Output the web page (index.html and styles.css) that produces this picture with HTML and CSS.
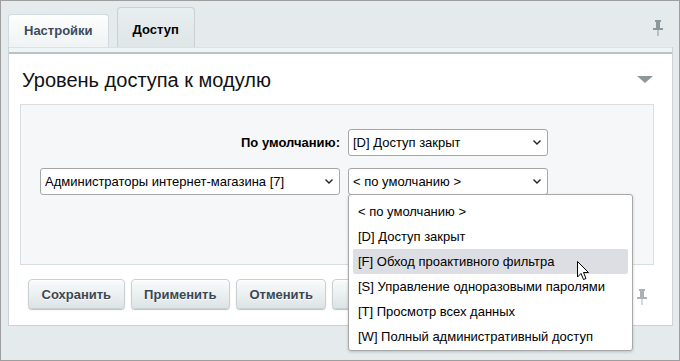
FILE: index.html
```html
<!DOCTYPE html>
<html lang="ru">
  <head>
    <meta charset="UTF-8" />
    <title>Доступ</title>
    <link rel="stylesheet" href="styles.css">
  </head>
  <body>
    <div class="window">
      <div class="tabs">
        <div class="tab">Настройки</div>
        <div class="tab tab-active">Доступ</div>
        <svg class="pin pin-top" width="10" height="16" viewBox="0 0 10 16">
          <rect x="2" y="0" width="6" height="2" fill="#8d969b" />
          <rect x="3" y="2" width="4" height="6" fill="#8d969b" />
          <rect x="0" y="8" width="10" height="2" fill="#8d969b" />
          <rect x="4.5" y="10" width="1" height="6" fill="#8d969b" />
        </svg>
      </div>

      <div class="panel">
        <div class="panel-strip"></div>

        <div class="panel-head">
          <h2>Уровень доступа к модулю</h2>
          <span class="collapse"></span>
        </div>

        <div class="access-box">
          <div class="access-grid">
            <div class="label">По умолчанию:</div>
            <div class="select">
              <span>[D] Доступ закрыт</span>
              <svg class="chevron" width="8" height="5" viewBox="0 0 8 5"><path d="M0.5 0.5 L4 4 L7.5 0.5" fill="none" stroke="#222" stroke-width="1.4" /></svg>
            </div>

            <div class="select">
              <span>Администраторы интернет-магазина [7]</span>
              <svg class="chevron" width="8" height="5" viewBox="0 0 8 5"><path d="M0.5 0.5 L4 4 L7.5 0.5" fill="none" stroke="#222" stroke-width="1.4" /></svg>
            </div>
            <div class="select select-open">
              <span>&lt; по умолчанию &gt;</span>
              <svg class="chevron" width="8" height="5" viewBox="0 0 8 5"><path d="M0.5 0.5 L4 4 L7.5 0.5" fill="none" stroke="#222" stroke-width="1.4" /></svg>

              <ul class="dropdown">
                <li>&lt; по умолчанию &gt;</li>
                <li>[D] Доступ закрыт</li>
                <li class="hover">[F] Обход проактивного фильтра
                  <svg class="cursor" width="13" height="20" viewBox="0 0 13 20">
                    <path d="M0.5 0.5 L0.5 16 L4 12.5 L6.5 18.5 L9 17.5 L6.5 11.5 L11.5 11.5 Z" fill="#fff" stroke="#000" stroke-width="1" stroke-linejoin="miter" />
                  </svg>
                </li>
                <li>[S] Управление одноразовыми паролями</li>
                <li>[T] Просмотр всех данных</li>
                <li>[W] Полный административный доступ</li>
              </ul>
            </div>
          </div>
        </div>

        <div class="buttons">
          <button class="btn">Сохранить</button>
          <button class="btn">Применить</button>
          <button class="btn">Отменить</button>
          <button class="btn btn-hidden"></button>
          <svg class="pin pin-bottom" width="10" height="16" viewBox="0 0 10 16">
            <rect x="2" y="0" width="6" height="2" fill="#a9b1b5" />
            <rect x="3" y="2" width="4" height="6" fill="#a9b1b5" />
            <rect x="0" y="8" width="10" height="2" fill="#a9b1b5" />
            <rect x="4.5" y="10" width="1" height="6" fill="#a9b1b5" />
          </svg>
        </div>
      </div>
    </div>
  </body>
</html>
```

FILE: styles.css
```css
body {
  margin: 0;
  font-family: "Liberation Sans", Arial, sans-serif;
  font-size: 13px;
  color: #000;
}

.window {
  box-sizing: border-box;
  width: 680px;
  height: 361px;
  border: 1px solid #9e9e9e;
  padding: 0 6px 0 7px;
  background-color: #e5ebed;
}

.tabs {
  display: flex;
  align-items: flex-end;
  gap: 8px;
  height: 46px;
}

.tab {
  box-sizing: border-box;
  height: 33px;
  padding: 8px 15px 0;
  line-height: 16px;
  font-weight: bold;
  color: #3d4a59;
  background: linear-gradient(#fdfefe, #eff3f4);
  border: 1px solid #d3dadd;
  border-bottom: none;
  border-radius: 4px 4px 0 0;
}

.tab-active {
  height: 40px;
  padding-top: 14px;
  color: #000;
  background: linear-gradient(#e9eef0, #dfe6e8);
  border-color: #c9d1d4;
}

.pin-top {
  align-self: flex-start;
  margin: 19px 10px 0 auto;
}

.panel {
  background-color: #fff;
  border: 1px solid #cbd3d6;
  border-top: none;
}

.panel-strip {
  height: 4px;
  background-color: #f1f4f5;
  border-top: 1px solid #dbe2e4;
  border-bottom: 2px solid #b9c2c6;
}

.panel-head {
  display: flex;
  align-items: center;
  padding: 14px 19px 0 13px;
}

.panel-head h2 {
  margin: 0;
  font-size: 20px;
  font-weight: normal;
  line-height: 24px;
  color: #111;
}

.collapse {
  margin-left: auto;
  margin-top: -1px;
  width: 0;
  height: 0;
  border-left: 8px solid transparent;
  border-right: 8px solid transparent;
  border-top: 7px solid #8e979c;
}

.access-box {
  margin: 12px 18px 0 11px;
  height: 135px;
  padding: 24px 0 0 19px;
  background-color: #f5f7f9;
  border: 1px solid #d6dee2;
}

.access-grid {
  display: grid;
  grid-template-columns: 300px 200px;
  column-gap: 8px;
  row-gap: 12px;
  align-items: center;
}

.label {
  text-align: right;
  font-weight: bold;
}

.select {
  position: relative;
  box-sizing: border-box;
  height: 27px;
  display: flex;
  align-items: center;
  padding: 0 6px 0 4px;
  background-color: #fff;
  border: 1px solid #a7a7a7;
  border-radius: 3px;
}

.chevron {
  margin-left: auto;
}

.dropdown {
  position: absolute;
  top: 100%;
  left: -1px;
  z-index: 2;
  box-sizing: border-box;
  width: 285px;
  margin: 0;
  padding: 4px 4px 1px;
  list-style: none;
  background-color: #fff;
  border: 1px solid #a9a9a9;
  border-radius: 3px;
  box-shadow: 0 1px 3px rgba(0, 0, 0, 0.2);
}

.dropdown li {
  position: relative;
  height: 25px;
  line-height: 25px;
  padding-left: 5px;
  white-space: nowrap;
}

.dropdown li.hover {
  background-color: #dddee4;
  border-radius: 2px;
}

.cursor {
  position: absolute;
  left: 224px;
  top: 12px;
}

.buttons {
  display: flex;
  align-items: center;
  gap: 6px;
  padding: 14px 0 16px 19px;
}

.btn {
  height: 30px;
  padding: 0 12.5px;
  font-family: "Liberation Sans", Arial, sans-serif;
  font-size: 13px;
  font-weight: bold;
  color: #3b4754;
  background: linear-gradient(#f9fbfb, #dde4e6);
  border: 1px solid #c9d0d3;
  border-radius: 4px;
  box-shadow: 0 1px 1px rgba(0, 0, 0, 0.25), inset 0 1px 0 #fff;
  text-shadow: 0 1px 0 #fff;
}

.btn-hidden {
  width: 90px;
}

.pin-bottom {
  margin: 6px 25px 0 auto;
}
```
